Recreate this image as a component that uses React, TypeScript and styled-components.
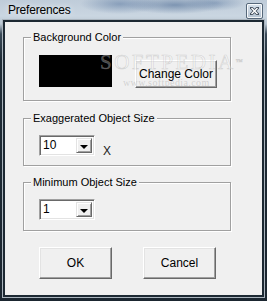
import React from "react";
import styled, { createGlobalStyle } from "styled-components";

const GlobalStyle = createGlobalStyle`
  html, body {
    margin: 0;
    padding: 0;
    background: #1c2832;
  }
  body {
    font-family: "Liberation Sans", Arial, sans-serif;
  }
`;

const Window = styled.div`
  width: 267px;
  height: 301px;
  display: flex;
  flex-direction: column;
  overflow: hidden;
  background:
    radial-gradient(ellipse 40px 10px at 120px 4px, rgba(90, 120, 160, 0.55), transparent),
    radial-gradient(ellipse 50px 9px at 175px 5px, rgba(80, 110, 150, 0.6), transparent),
    radial-gradient(ellipse 30px 8px at 215px 3px, rgba(90, 120, 160, 0.45), transparent),
    linear-gradient(to bottom, #bfccd9 0, #cad6e1 16px, #b9c6d2 24px, #3a4a58 34px, #1f2c36 60px, #1b2630 100%);
`;

const TitleBar = styled.div`
  height: 22px;
  flex: none;
  display: flex;
  justify-content: space-between;
  align-items: flex-start;
  padding: 0 4px 0 8px;
`;

const Title = styled.span`
  font-family: "Liberation Sans", Arial, sans-serif;
  font-size: 12px;
  line-height: 12px;
  margin-top: 4px;
  letter-spacing: -0.2px;
  color: #000;
  text-shadow: 0 0 6px rgba(255, 255, 255, 0.9);
`;

const CloseButton = styled.div`
  width: 15px;
  height: 14px;
  margin-top: 3px;
  border: 1px solid #56687a;
  border-radius: 2px;
  box-shadow: inset 0 0 0 1px rgba(255, 255, 255, 0.85);
  background: linear-gradient(to bottom, #d8e2ec, #b4c2d0);
  display: flex;
  align-items: center;
  justify-content: center;
`;

const Client = styled.div`
  flex: 1;
  margin: 0 5px 6px 5px;
  background: #f0f0f0;
  box-shadow: 0 0 0 2px #1c2832, 0 0 0 3px #aab4bd;
  display: flex;
  flex-direction: column;
  padding: 15px 0 0 18px;
  position: relative;
`;

const Group = styled.div<{ $height: number; $gap: number; $top: number }>`
  position: relative;
  box-sizing: border-box;
  width: 208px;
  height: ${({ $height }) => $height}px;
  margin-top: ${({ $gap }) => $gap}px;
  border: 1px solid #a0a0a0;
  box-shadow: inset 1px 1px 0 #ffffff, 1px 1px 0 #ffffff;
  padding: ${({ $top }) => $top}px 0 0 15px;
  display: flex;
  align-items: flex-start;
`;

const Caption = styled.span`
  position: absolute;
  top: -7px;
  left: 7px;
  padding: 0 2px;
  background: #f0f0f0;
  font-size: 11px;
  line-height: 13px;
  color: #000;
`;

const Swatch = styled.div`
  width: 73px;
  height: 32px;
  background: #000;
`;

const PushButton = styled.button<{ $w: number; $h: number }>`
  box-sizing: border-box;
  width: ${({ $w }) => $w}px;
  height: ${({ $h }) => $h}px;
  padding: 0;
  background: #f0f0f0;
  border: 1px solid;
  border-color: #ffffff #696969 #696969 #ffffff;
  box-shadow: inset -1px -1px 0 #a0a0a0, inset 1px 1px 0 #e3e3e3;
  font-family: "Liberation Sans", Arial, sans-serif;
  font-size: 12px;
  color: #000;
`;

const ChangeButton = styled(PushButton)`
  margin: 5px 0 0 23px;
`;

const Combo = styled.div`
  box-sizing: border-box;
  width: 56px;
  height: 21px;
  background: #fff;
  border: 1px solid;
  border-color: #a0a0a0 #ffffff #ffffff #a0a0a0;
  box-shadow: inset 1px 1px 0 #696969, inset -1px -1px 0 #e3e3e3;
  display: flex;
  align-items: stretch;
  padding: 2px;
`;

const ComboValue = styled.span`
  flex: 1;
  font-size: 12px;
  line-height: 15px;
  padding-left: 1px;
  color: #000;
`;

const DropButton = styled.div`
  box-sizing: border-box;
  width: 16px;
  background: #f0f0f0;
  border: 1px solid;
  border-color: #e3e3e3 #696969 #696969 #e3e3e3;
  box-shadow: inset 1px 1px 0 #ffffff, inset -1px -1px 0 #a0a0a0;
  display: flex;
  align-items: center;
  justify-content: center;
`;

const Arrow = styled.div`
  width: 0;
  height: 0;
  border-left: 4px solid transparent;
  border-right: 4px solid transparent;
  border-top: 4px solid #000;
  margin-top: 2px;
`;

const Unit = styled.span`
  font-size: 12px;
  line-height: 12px;
  margin: 10px 0 0 8px;
  color: #222;
`;

const ButtonRow = styled.div`
  display: flex;
  gap: 31px;
  margin: 16px 0 0 16px;
`;

const Watermark = styled.div`
  position: absolute;
  left: 76px;
  top: 14px;
  display: flex;
  flex-direction: column;
  align-items: flex-start;
  pointer-events: none;
`;

const WatermarkLogo = styled.span`
  font-family: "Liberation Serif", serif;
  font-size: 21px;
  line-height: 21px;
  letter-spacing: 2.5px;
  color: rgba(255, 255, 255, 0.3);
  -webkit-text-stroke: 0.6px rgba(150, 150, 150, 0.35);
`;

const Trademark = styled.sup`
  font-size: 7px;
  vertical-align: top;
  letter-spacing: 0;
`;

const WatermarkUrl = styled.span`
  font-family: "Liberation Serif", serif;
  font-size: 10px;
  line-height: 10px;
  margin: 5px 0 0 23px;
  letter-spacing: 0.4px;
  color: rgba(150, 150, 150, 0.35);
`;

const Dropdown = ({ value }: { value: string }) => (
  <Combo>
    <ComboValue>{value}</ComboValue>
    <DropButton>
      <Arrow />
    </DropButton>
  </Combo>
);

export default function App() {
  return (
    <>
      <GlobalStyle />
      <Window>
        <TitleBar>
          <Title>Preferences</Title>
          <CloseButton>
            <svg width="9" height="8" viewBox="0 0 9 8">
              <path
                d="M1.5 1 L7.5 7 M7.5 1 L1.5 7"
                stroke="#3a4654"
                strokeWidth="3"
                strokeLinecap="square"
              />
              <path
                d="M1.5 1 L7.5 7 M7.5 1 L1.5 7"
                stroke="#ffffff"
                strokeWidth="1.5"
              />
            </svg>
          </CloseButton>
        </TitleBar>
        <Client>
          <Group $height={64} $gap={0} $top={17}>
            <Caption>Background Color</Caption>
            <Swatch />
            <ChangeButton $w={82} $h={28}>Change Color</ChangeButton>
            <Watermark>
              <WatermarkLogo>
                SOFTPEDIA<Trademark>™</Trademark>
              </WatermarkLogo>
              <WatermarkUrl>www.softpedia.com</WatermarkUrl>
            </Watermark>
          </Group>
          <Group $height={48} $gap={17} $top={16}>
            <Caption>Exaggerated Object Size</Caption>
            <Dropdown value="10" />
            <Unit>X</Unit>
          </Group>
          <Group $height={49} $gap={16} $top={16}>
            <Caption>Minimum Object Size</Caption>
            <Dropdown value="1" />
          </Group>
          <ButtonRow>
            <PushButton $w={73} $h={32}>OK</PushButton>
            <PushButton $w={73} $h={32}>Cancel</PushButton>
          </ButtonRow>
        </Client>
      </Window>
    </>
  );
}
